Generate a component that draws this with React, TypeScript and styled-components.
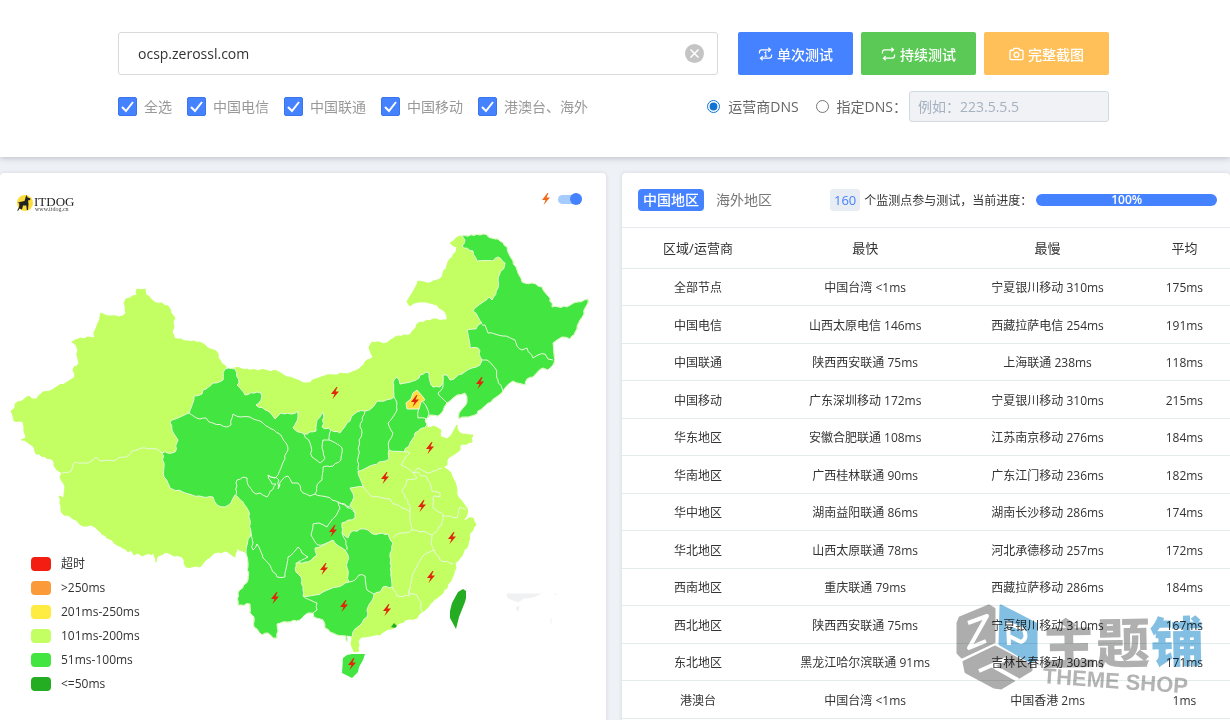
import React, { useState } from "react";
import styled, { createGlobalStyle } from "styled-components";

const GlobalStyle = createGlobalStyle`
  *, *::before, *::after { box-sizing: border-box; }
  body {
    margin: 0;
    background: #eef1f5;
    color: #333;
    font-family: "Open Sans", "Noto Sans CJK SC", sans-serif;
    font-size: 14px;
  }
  button, input { font-family: inherit; }
`;

/* ---------- search bar ---------- */

const SearchPanel = styled.header`
  display: flex;
  flex-direction: column;
  gap: 16px;
  padding: 32px 121px 35px 118px;
  background: #fff;
  box-shadow: 0 1px 6px rgba(60, 70, 90, 0.3);
`;

const Row = styled.div`
  display: flex;
  align-items: center;
  justify-content: space-between;
`;

const HostField = styled.div`
  flex: 1;
  display: flex;
  align-items: center;
  height: 43px;
  margin-right: 20px;
  padding: 0 13px 0 19px;
  border: 1px solid #d9d9d9;
  border-radius: 3px;
`;

const HostInput = styled.input`
  flex: 1;
  min-width: 0;
  padding: 0;
  border: 0;
  outline: 0;
  background: transparent;
  color: #333;
  font-size: 14px;
`;

const ClearButton = styled.button`
  display: flex;
  padding: 0;
  border: 0;
  background: none;
  cursor: pointer;
`;

const Actions = styled.div`
  display: flex;
  gap: 8px;
`;

const ActionButton = styled.button<{ $color: string; $pad: number }>`
  display: flex;
  align-items: center;
  gap: 4px;
  height: 43px;
  padding: 0 ${(p) => p.$pad}px;
  border: 0;
  border-radius: 2px;
  background: ${(p) => p.$color};
  color: #fff;
  font-size: 14px;
  font-weight: 500;
  cursor: pointer;
`;

const Options = styled.div`
  display: flex;
  align-items: center;
  gap: 15px;
`;

const CheckLabel = styled.label`
  display: flex;
  align-items: center;
  gap: 7px;
  color: #999;
  font-size: 14px;
  line-height: 20px;
`;

const CheckBox = styled.input`
  appearance: none;
  width: 19px;
  height: 19px;
  margin: 0;
  border: 1px solid #3a75ec;
  border-radius: 2px;
  background: #fff;
  &:checked {
    background: #4582ff
      url("data:image/svg+xml,%3Csvg xmlns='http://www.w3.org/2000/svg' viewBox='0 0 17 17' fill='none' stroke='white' stroke-width='2'%3E%3Cpath d='M3 9l4 4 7-9'/%3E%3C/svg%3E")
      center / 17px 17px no-repeat;
  }
`;

const RadioLabel = styled.label`
  display: flex;
  align-items: center;
  gap: 8px;
  color: #666;
  font-size: 14px;
  line-height: 20px;
`;

const Radio = styled.input`
  width: 13px;
  height: 13px;
  margin: 0;
  accent-color: #1273d2;
`;

const DnsGroup = styled.div`
  display: flex;
  align-items: center;
  gap: 17px;
`;

const DnsCustom = styled.div`
  display: flex;
  align-items: center;
  gap: 2px;
`;

const DnsInput = styled.input`
  width: 200px;
  height: 31px;
  padding: 0 8px;
  border: 1px solid #d3d9e0;
  border-radius: 3px;
  background: #f0f2f6;
  font-size: 14px;
  &::placeholder { color: #a5b1bf; opacity: 1; }
`;

/* ---------- panels ---------- */

const Columns = styled.main`
  display: grid;
  grid-template-columns: minmax(0, 606fr) minmax(0, 608fr);
  gap: 16px;
  padding-top: 16px;
`;

const Panel = styled.section`
  position: relative;
  padding-bottom: 16px;
  border-radius: 4px;
  background: #fff;
  box-shadow: 0 0 4px rgba(60, 70, 90, 0.15);
`;

const MapHeader = styled.div`
  display: flex;
  align-items: flex-start;
  justify-content: space-between;
  height: 47px;
  padding: 20px 24px 0 16px;
`;

const ToggleLabel = styled.label`
  display: flex;
  align-items: center;
  gap: 7px;
`;

const Toggle = styled.input`
  appearance: none;
  display: flex;
  align-items: center;
  width: 24px;
  height: 9px;
  margin: 0;
  border-radius: 5px;
  background: #a6ccff;
  &::after {
    content: "";
    width: 12px;
    height: 12px;
    border-radius: 6px;
    background: #4582ff;
  }
  &:checked { justify-content: flex-end; }
`;

const MapArea = styled.div`
  position: relative;
  svg { display: block; width: 100%; }
`;

const Legend = styled.ul`
  position: absolute;
  left: 31px;
  bottom: 4px;
  margin: 0;
  padding: 0;
  list-style: none;
`;

const LegendItem = styled.li<{ $color: string }>`
  display: flex;
  align-items: center;
  gap: 10px;
  font-size: 12px;
  line-height: 24px;
  &::before {
    content: "";
    width: 20px;
    height: 14px;
    border-radius: 4px;
    background: ${(p) => p.$color};
  }
`;

const ResultHeader = styled.div`
  display: flex;
  align-items: center;
  height: 55px;
  padding: 0 13px 0 16px;
  border-bottom: 1px solid #e6e9ed;
`;

const Tab = styled.button<{ $active?: boolean }>`
  height: 22px;
  margin-right: 7px;
  padding: 0 5px;
  border: 0;
  border-radius: 4px;
  background: ${(p) => (p.$active ? "#4582ff" : "transparent")};
  color: ${(p) => (p.$active ? "#fff" : "#777")};
  font-size: 14px;
  font-weight: ${(p) => (p.$active ? 500 : 400)};
  line-height: 20px;
  cursor: pointer;
`;

const Count = styled.span`
  margin: 0 4px 0 46px;
  padding: 0 4px;
  border-radius: 3px;
  background: #e8edf4;
  color: #4582ff;
  font-size: 13px;
  line-height: 22px;
`;

const ProgressText = styled.span`
  font-size: 12px;
  white-space: nowrap;
`;

const ProgressBar = styled.div`
  flex: 1;
  margin-left: 4px;
  border-radius: 6px;
  background: #4582ff;
  color: #fff;
  font-size: 12px;
  font-weight: 600;
  line-height: 12px;
  text-align: center;
`;

const Table = styled.table`
  width: 100%;
  border-collapse: separate;
  border-spacing: 0;
  table-layout: fixed;
  font-size: 12px;
  th, td {
    padding: 0;
    border-bottom: 1px solid #e4ebec;
    text-align: center;
    font-weight: 400;
    line-height: 18px;
  }
  thead th { height: 41px; font-size: 13px; }
  tbody td { height: 37px; padding-top: 2px; }
  tbody tr:nth-child(even) td { height: 38px; }
  th:nth-child(1) { width: 25%; }
  th:nth-child(2) { width: 30%; }
  th:nth-child(3) { width: 30%; }
  th:nth-child(4) { width: 15%; }
`;

const Watermark = styled.div`
  position: absolute;
  top: 430px;
  right: 26px;
  display: flex;
  gap: 4px;
  pointer-events: none;
  mix-blend-mode: multiply;
  white-space: nowrap;
`;

const MarkWords = styled.div`
  padding-top: 8px;
  transform: rotate(-1deg);
`;

const MarkTitle = styled.div`
  color: #b0b0b0;
  font-family: "Noto Sans CJK SC", sans-serif;
  font-size: 54px;
  font-weight: 900;
  line-height: 58px;
  span { color: #83bfe3; }
`;

const MarkSub = styled.div`
  color: #b4b4b4;
  font-family: "Liberation Sans", sans-serif;
  font-size: 22px;
  font-weight: 700;
  line-height: 26px;
  transform: rotate(5deg);
`;

/* ---------- drawings ---------- */

const LOOP_TOP = "M1.5 7V5.5Q1.5 3 4 3H13M11 .8L13.4 3L11 5.2";
const LOOP_BOTTOM = "M14.5 8V9.500Q14.500 12 12 12H3M5 9.800L2.600 12L5 14.200";

function LoopIcon({ once }: { once?: boolean }) {
  return (
    <svg width="15" height="14" viewBox="0 0 16 15" fill="none" stroke="#fff" strokeWidth="1.3">
      <path d={LOOP_TOP} />
      <path d={LOOP_BOTTOM} />
      {once && <path d="M6.800 6L8.300 5.200V10M6.800 10H9.800" strokeWidth="1.1" />}
    </svg>
  );
}

function CameraIcon() {
  return (
    <svg width="15" height="14" viewBox="0 0 16 15" fill="none" stroke="#fff" strokeWidth="1.4">
      <path d="M2.200 3.500H4.300L5.500 1.500H10.500L11.700 3.500H13.800Q15 3.500 15 4.700V12.300Q15 13.500 13.800 13.500H2.200Q1 13.500 1 12.300V4.700Q1 3.500 2.200 3.500Z" />
      <circle cx="8" cy="8.300" r="2.600" />
    </svg>
  );
}

function ClearIcon() {
  return (
    <svg width="19" height="19" viewBox="0 0 19 19">
      <circle cx="9.500" cy="9.500" r="9.500" fill="#c4c4c4" />
      <path d="M5.500 5.500L13.500 13.500M13.500 5.500L5.500 13.500" stroke="#fff" strokeWidth="1.500" />
    </svg>
  );
}

function Logo() {
  return (
    <svg width="60" height="20" viewBox="0 0 60 20" role="img" aria-label="ITDOG">
      <circle cx="9" cy="10" r="8" fill="#fbdc3a" />
      <path
        d="M10.300 2L11.700 4.500L14.500 5.500L14 7L12 7.500L12.500 11L12 17H10.800L10.300 12.500L7 12.500L6 16.500L3.500 15.500L2 18L1.300 17.500L3.200 13.500L3.300 10.500L1.800 9.500L4 9L8.500 8Z"
        fill="#222"
      />
      <text x="18" y="13" fontFamily="Liberation Serif, serif" fontSize="13" fill="#222">ITDOG</text>
      <text x="19" y="18" fontFamily="Liberation Serif, serif" fontSize="6" fill="#444">www.itdog.cn</text>
    </svg>
  );
}

const BOLT = "M1.500 -6L-4 1L-0.500 1L-2.500 6L4 -1.500L0.500 -1.500L2.500 -6Z";

const LIGHT = "#c3ff63";
const GREEN = "#43e640";
const DEEP = "#24ad22";

/* Outline of the mainland, clockwise from the north-west. */
const MAINLAND =
  "137,289 145,289 146,295 151,299 156,303 162,303 168,306 171,313 175,318 173,322 174,327 172,332 174,338 188,341 200,342 205,345 210,349 216,351 220,360 227,369 235,368 256,370 277,371 287,377 300,381 307,383 327,375 350,373 359,369 367,360 373,357 369,347 372,342 387,343 395,337 410,335 417,324 433,319 447,320 447,317 443,310 437,305 426,302 418,302 410,306 407,302 418,281 430,283 442,277 448,262 456,252 457,247 450,243 456,238 462,236 483,234 495,239 498,239 507,247 511,258 517,270 522,282 532,283 542,287 550,298 552,307 567,307 572,304 578,302 588,299 588,303 585,308 584,314 580,320 577,329 570,339 562,337 553,343 554,363 548,370 543,368 533,377 527,379 525,385 513,381 510,383 503,391 491,402 478,411 477,414 465,417 459,419 459,413 467,402 467,397 465,393 457,395 447,403 443,411 438,416 430,415 425,420 427,425 427,427 436,427 441,430 441,437 447,439 453,432 457,425 459,432 462,434 473,435 472,442 460,445 460,450 453,455 447,460 447,465 443,467 451,473 455,482 457,490 458,497 467,508 466,517 463,520 473,518 476,525 470,533 468,545 460,558 455,563 456,568 452,578 447,588 437,598 430,604 422,612 417,618 409,619 400,623 392,629 385,631 380,635 362,637 358,642 359,651 354,652 351,643 352,637 347,636 347,642 346,636 337,635 325,628 323,620 314,617 313,613 308,613 300,620 287,622 277,624 277,638 273,638 268,633 262,635 254,627 254,617 250,613 250,604 238,605 238,593 248,580 248,563 246,553 236,548 235,557 228,552 218,552 212,555 205,561 200,567 186,567 182,557 174,556 166,552 158,556 156,562 154,553 142,556 138,553 134,555 131,550 128,552 123,548 117,545 112,540 107,538 98,530 91,525 83,526 73,519 62,513 60,503 59,496 64,498 65,487 60,477 62,473 57,470 54,466 53,460 36,454 34,447 27,442 21,440 26,438 24,427 23,422 14,421 11,411 15,408 15,404 29,396 32,399 37,399 43,392 50,391 55,388 74,378 74,367 79,363 76,345 72,342 87,337 95,338 94,332 98,323 101,313 105,315 119,317 126,313 124,303 126,299 137,295";

/* The 51-100ms provinces of the west, north and south-west. */
const WEST_GREEN =
  "223,373 225,369 235,369 239,383 237,385 245,395 257,392 261,393 261,400 256,405 268,411 275,419 281,413 291,414 298,411 298,417 293,428 298,432 304,434 316,431 317,420 323,412 324,417 322,427 331,430 340,433 344,428 347,423 357,412 365,411 373,407 377,401 384,401 394,397 393,382 397,377 400,384 405,383 419,378 420,375 426,372 429,373 430,381 433,387 440,387 443,383 443,375 447,375 450,380 462,374 472,368 480,365 482,360 478,348 470,348 467,330 476,329 478,325 482,323 478,317 473,311 489,297 492,300 498,288 498,280 505,263 498,257 493,261 477,261 473,251 462,246 465,240 462,236 483,234 495,239 498,239 507,247 511,258 517,270 522,282 532,283 542,287 550,298 552,307 567,307 572,304 578,302 588,299 588,303 585,308 584,314 580,320 577,329 570,339 562,337 553,343 554,363 548,370 543,368 533,377 527,379 525,385 513,381 510,383 503,391 491,402 478,411 477,414 465,417 459,419 459,413 467,402 467,397 465,393 457,395 447,403 443,411 438,416 430,415 425,420 427,425 415,433 410,443 404,452 389,450 389,459 373,465 358,471 363,487 350,488 354,497 350,505 355,513 355,518 342,523 342,533 348,538 350,533 360,529 368,530 373,534 388,534 393,543 390,557 391,572 392,587 383,587 380,592 374,594 373,599 368,607 367,617 362,623 353,632 352,637 347,636 347,642 346,636 337,635 325,628 323,620 314,617 313,613 308,613 300,620 287,622 277,624 277,638 273,638 268,633 262,635 254,627 254,617 250,613 250,604 238,605 238,593 248,580 248,563 246,553 247,545 251,533 250,520 248,510 243,502 235,495 231,503 225,507 217,505 213,497 203,497 192,495 185,493 170,488 164,477 164,463 162,453 175,452 178,440 172,430 170,422 189,413 194,396 202,394 203,390 213,383 223,380";

const GUIZHOU =
  "333,540 337,545 345,550 348,555 347,568 349,582 337,587 323,592 315,595 303,596 303,590 301,577 296,572 296,563 308,562 317,555 315,548 327,543";

const BORDERS = [
  "62,473 70,472 75,462 88,463 96,457 100,461 113,461 120,457 126,457 132,451 145,448 157,449 162,453",
  "189,413 200,419 206,418 209,422 213,423 227,427 231,425 233,414 240,417 250,417 263,423 274,430 282,437 286,443 288,450 282,465 278,475 275,478 268,475 272,484 276,484 267,497 260,493 256,494 253,492 248,485 247,478 243,477 237,480 236,495",
  "268,475 279,480 278,489 282,480 288,476 292,483 298,483 303,493 310,496 315,494 327,497 338,502 350,507",
  "315,494 317,485 322,480 323,467 333,466 341,460 342,448 329,440 331,430",
  "304,434 310,443 312,457 320,463 325,458 322,448 323,440 329,440",
  "365,411 360,427 362,433 359,440 358,470",
  "338,502 340,508 335,517 327,527 319,523 313,524 311,535 318,545 327,543",
  "251,533 253,550 257,544 263,558 268,563 277,577 285,577 288,557 298,547 302,553 308,557 298,562",
  "338,502 345,505 355,513",
  "342,533 346,541 347,550",
  "303,596 317,603 317,610 313,613",
  "349,582 355,580 359,575 365,576 367,590 374,594",
  "363,487 373,497 390,499 393,504 402,508 410,512 408,500 402,492 407,480 417,478 413,473 401,465 404,460 410,453 404,452",
  "413,473 418,468 427,473 433,471 442,468",
  "413,473 418,472 421,476 427,477 430,483 432,491 440,493 440,497 434,496 433,508 443,515 442,525 432,535 426,532 420,532 412,530 410,517 410,512",
  "443,515 450,516 457,518 460,507 466,509",
  "432,535 431,543 434,550 422,557 417,567 412,576 410,588 409,596 397,596 392,587",
  "412,530 405,533 400,533 393,538",
  "434,550 440,560 453,564",
  "410,588 409,594 417,595 421,602 422,612",
  "394,397 397,403 397,410 388,423 393,433 389,441 389,450",
  "443,383 443,387 438,393 442,398 447,403",
  "482,360 487,360 495,368 498,380 503,391",
  "482,325 485,325 488,333 503,336 515,340 517,346 522,350 527,348 533,358 538,355 545,354 548,359 553,360",
  "423,402 427,408 429,414 427,419 418,418 419,408",
];

/* Breaks each long stretch into short uneven steps, so coasts and borders look
   surveyed. The steps depend only on the two end points, in either order, so
   neighbouring regions stay joined. */
function roughen(points: string, closed: boolean): string {
  const list = points.split(" ").map((pair) => pair.split(",").map(Number));
  const out: string[] = [];
  const last = closed ? list.length : list.length - 1;
  for (let i = 0; i < last; i++) {
    const from = list[i];
    const to = list[(i + 1) % list.length];
    out.push(from.join(","));
    const swap = from[0] > to[0] || (from[0] === to[0] && from[1] > to[1]);
    const [a, b] = swap ? [to, from] : [from, to];
    const dx = b[0] - a[0];
    const dy = b[1] - a[1];
    const length = Math.hypot(dx, dy);
    const steps = Math.floor(length / 3);
    const added: string[] = [];
    for (let k = 1; k < steps; k++) {
      const seed = Math.sin(a[0] * 12.9 + a[1] * 78.2 + k * 37.7) * 43758.5;
      const shift = (seed - Math.floor(seed) - 0.5) * 2;
      const x = a[0] + (dx * k) / steps - (dy / length) * shift;
      const y = a[1] + (dy * k) / steps + (dx / length) * shift;
      added.push(`${x.toFixed(1)},${y.toFixed(1)}`);
    }
    out.push(...(swap ? added.reverse() : added));
  }
  if (!closed) out.push(list[list.length - 1].join(","));
  return out.join(" ");
}

const BOLTS = [
  [335, 393], [415, 401], [480, 383], [430, 448], [385, 478], [422, 506], [452, 538],
  [431, 577], [333, 531], [324, 569], [275, 598], [344, 606], [387, 610], [352, 664],
];

function ChinaMap() {
  return (
    <svg viewBox="0 220 606 480" role="img" aria-label="中国地区">
      <g stroke="#e9f7de" strokeWidth="1" strokeLinejoin="round">
        <polygon points={roughen(MAINLAND, true)} fill={LIGHT} stroke={LIGHT} />
        <polygon points={roughen(WEST_GREEN, true)} fill={GREEN} />
        <polygon points={roughen(GUIZHOU, true)} fill={LIGHT} />
        {BORDERS.map((line) => (
          <polyline key={line} points={roughen(line, false)} fill="none" />
        ))}
        <polygon points="417,390 423,397 425,400 421,402 419,409 407,409 406,403 411,399 413,393" fill="#ffdf3d" />
      </g>
      <polygon points="343,658 347,655 352,654 365,654 363,660 359,667 358,672 352,678 342,673" fill={GREEN} />
      <polygon points="463,589 466,591 466,598 465,602 459,617 456,629 450,618 450,611 452,603 458,592" fill={DEEP} />
      <polygon points="394,623 397,626 395,628 391,627" fill={DEEP} />
      <path d="M507 594H540L533 597L524 598L518 602L508 598ZM516 608L519 606L518 611ZM554 594h3M551 618v6" fill="#f0f1f3" stroke="#f0f1f3" />
      {BOLTS.map(([x, y]) => (
        <path key={`${x}-${y}`} d={BOLT} transform={`translate(${x} ${y})`} fill="#e0260c" />
      ))}
    </svg>
  );
}

function CubeMark() {
  return (
    <svg width="82" height="88" viewBox="0 0 82 88" fill="none" strokeLinejoin="round">
      <path d="M4 15L33 3L38 6V39L6 54L2 50V20Z" fill="#adadad" stroke="#adadad" strokeWidth="3" />
      <path d="M45 3L80 21V56L75 59L44 41Z" fill="#83bfe3" stroke="#83bfe3" strokeWidth="3" />
      <path d="M8 59L39 44L75 63V67L45 85L38 84L10 69Z" fill="#adadad" stroke="#adadad" strokeWidth="3" />
      <path d="M12 20L31 13L13 45L30 38" stroke="#fff" strokeWidth="4" />
      <path d="M53 42L52 20L68 27Q72 36 65 39L53 33" stroke="#fff" strokeWidth="4" />
      <path d="M23 68L50 56M35 62L62 77" stroke="#fff" strokeWidth="4" />
    </svg>
  );
}

/* ---------- data ---------- */

const CARRIERS = ["全选", "中国电信", "中国联通", "中国移动", "港澳台、海外"];

const LEGEND = [
  ["#f31d12", "超时"],
  ["#fb9a38", ">250ms"],
  ["#ffec42", "201ms-250ms"],
  [LIGHT, "101ms-200ms"],
  [GREEN, "51ms-100ms"],
  [DEEP, "<=50ms"],
];

const RESULTS = [
  ["全部节点", "中国台湾 <1ms", "宁夏银川移动 310ms", "175ms"],
  ["中国电信", "山西太原电信 146ms", "西藏拉萨电信 254ms", "191ms"],
  ["中国联通", "陕西西安联通 75ms", "上海联通 238ms", "118ms"],
  ["中国移动", "广东深圳移动 172ms", "宁夏银川移动 310ms", "215ms"],
  ["华东地区", "安徽合肥联通 108ms", "江苏南京移动 276ms", "184ms"],
  ["华南地区", "广西桂林联通 90ms", "广东江门移动 236ms", "182ms"],
  ["华中地区", "湖南益阳联通 86ms", "湖南长沙移动 286ms", "174ms"],
  ["华北地区", "山西太原联通 78ms", "河北承德移动 257ms", "172ms"],
  ["西南地区", "重庆联通 79ms", "西藏拉萨移动 286ms", "184ms"],
  ["西北地区", "陕西西安联通 75ms", "宁夏银川移动 310ms", "167ms"],
  ["东北地区", "黑龙江哈尔滨联通 91ms", "吉林长春移动 303ms", "171ms"],
  ["港澳台", "中国台湾 <1ms", "中国香港 2ms", "1ms"],
];

export default function App() {
  const [host, setHost] = useState("ocsp.zerossl.com");

  return (
    <>
      <GlobalStyle />
      <SearchPanel>
        <Row>
          <HostField>
            <HostInput aria-label="域名" value={host} onChange={(e) => setHost(e.target.value)} />
            <ClearButton type="button" aria-label="清空" onClick={() => setHost("")}>
              <ClearIcon />
            </ClearButton>
          </HostField>
          <Actions>
            <ActionButton $color="#4582ff" $pad={20}><LoopIcon once />单次测试</ActionButton>
            <ActionButton $color="#5bc955" $pad={20}><LoopIcon />持续测试</ActionButton>
            <ActionButton $color="#ffc05a" $pad={25}><CameraIcon />完整截图</ActionButton>
          </Actions>
        </Row>
        <Row>
          <Options>
            {CARRIERS.map((name) => (
              <CheckLabel key={name}>
                <CheckBox type="checkbox" defaultChecked />
                {name}
              </CheckLabel>
            ))}
          </Options>
          <DnsGroup>
            <RadioLabel>
              <Radio type="radio" name="dns" defaultChecked />
              运营商DNS
            </RadioLabel>
            <DnsCustom>
              <RadioLabel>
                <Radio type="radio" name="dns" />
                指定DNS：
              </RadioLabel>
              <DnsInput aria-label="指定DNS" placeholder="例如：223.5.5.5" />
            </DnsCustom>
          </DnsGroup>
        </Row>
      </SearchPanel>

      <Columns>
        <Panel>
          <MapHeader>
            <Logo />
            <ToggleLabel>
              <svg width="9" height="12" viewBox="-4 -6 9 12">
                <path d={BOLT} fill="#f0691c" />
              </svg>
              <Toggle type="checkbox" role="switch" aria-label="闪电" defaultChecked />
            </ToggleLabel>
          </MapHeader>
          <MapArea>
            <ChinaMap />
            <Legend>
              {LEGEND.map(([color, text]) => (
                <LegendItem key={text} $color={color}>{text}</LegendItem>
              ))}
            </Legend>
          </MapArea>
        </Panel>

        <Panel>
          <ResultHeader>
            <Tab type="button" $active>中国地区</Tab>
            <Tab type="button">海外地区</Tab>
            <Count>160</Count>
            <ProgressText>个监测点参与测试，当前进度：</ProgressText>
            <ProgressBar role="progressbar" aria-valuenow={100}>100%</ProgressBar>
          </ResultHeader>
          <Table>
            <thead>
              <tr>
                <th>区域/运营商</th>
                <th>最快</th>
                <th>最慢</th>
                <th>平均</th>
              </tr>
            </thead>
            <tbody>
              {RESULTS.map(([area, fast, slow, avg]) => (
                <tr key={area}>
                  <td>{area}</td>
                  <td>{fast}</td>
                  <td>{slow}</td>
                  <td>{avg}</td>
                </tr>
              ))}
            </tbody>
          </Table>
          <Watermark aria-hidden="true">
            <CubeMark />
            <MarkWords>
              <MarkTitle>主题<span>铺</span></MarkTitle>
              <MarkSub>THEME SHOP</MarkSub>
            </MarkWords>
          </Watermark>
        </Panel>
      </Columns>
    </>
  );
}
